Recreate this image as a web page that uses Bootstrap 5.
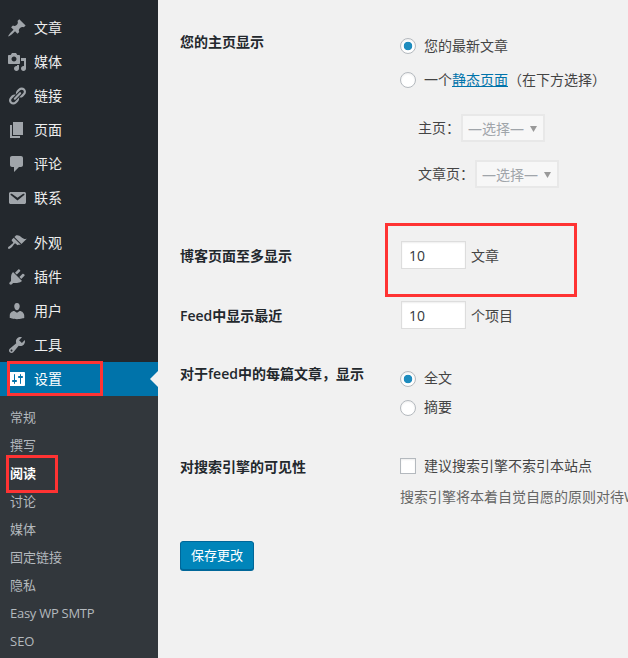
<!DOCTYPE html>
<html lang="zh-CN">
<head>
<meta charset="utf-8">
<title>阅读设置</title>
<link href="https://cdn.jsdelivr.net/npm/bootstrap@5.3.0/dist/css/bootstrap.min.css" rel="stylesheet">
<style>
html,body{height:100%;margin:0;overflow:hidden}
body{background:#f1f1f1;color:#444;font-family:"Open Sans","Noto Sans CJK SC",sans-serif;font-size:14px}
.wp-shell{height:658px;width:628px;overflow:hidden;position:relative}
.wp-side{width:158px;flex:none;background:#23282d;padding-top:11px}
.wp-group+.wp-group{margin-top:11px}
.wp-item{height:34px;padding-left:7px;gap:7px;color:#eee;text-decoration:none;font-size:14px;position:relative}
.wp-item span{padding-bottom:2px}
.wp-item svg{width:20px;height:20px;fill:#a0a5aa;flex:none}
.wp-item.on{background:#0073aa;color:#fff}
.wp-item.on svg{fill:#fff}
.wp-item.on::after{content:"";position:absolute;right:0;top:9px;border:8px solid transparent;border-right-color:#f1f1f1;border-left-width:0}
.wp-sub{background:#32373c;padding-top:7px;height:262px}
.wp-sub a{display:block;height:28px;line-height:28px;padding-left:10px;font-size:13px;color:#b4b9be;text-decoration:none;white-space:nowrap}
.wp-sub a.on{color:#fff;font-weight:700}
.wp-sub a.tight{letter-spacing:-.27px}
.wp-main{flex:1;min-width:0;padding-left:22px;white-space:nowrap}
.lbl{width:220px;flex:none;font-weight:700;line-height:26px;color:#23282d;font-size:14px}
.lbl i{font-style:normal;font-weight:600}
.mid .lbl{width:221px;padding-top:2px}
.r1{margin-top:29px}
.opt{height:34px;gap:8px}
.opt span{padding-bottom:2px}
.opt2{height:29px;gap:8px}
.opt2 span{padding-bottom:2px}
.opt3{height:24px;gap:8px}
.opt3 span{padding-bottom:1px}
.wp-main .form-check-input{width:16px;height:16px;margin:0;flex:none;border:1px solid #b4b9be;background-color:#fff;box-shadow:inset 0 1px 2px rgba(0,0,0,.07)}
.wp-main .form-check-input:checked[type=radio]{background-image:radial-gradient(circle at center,#1e8cbe 0 4px,transparent 4.6px);background-color:#fff;border-color:#b4b9be}
.wp-main .form-check-input[type=checkbox]{border-radius:0}
.wp-main a{color:#0073aa}
.sel-row{height:28px;padding-left:18px;gap:1px}
.sel-row>span{padding-bottom:2px}
.sel-row+.sel-row{margin-top:18px}
.sel-first{margin-top:17px}
.wp-main .form-select{width:84px;height:28px;padding:0 0 0 5px;border:2px solid #e8e8e8;border-radius:0;font-size:14px;color:#a0a5aa;background-color:#f7f7f7;opacity:1;
background-image:url("data:image/svg+xml,%3Csvg xmlns='http://www.w3.org/2000/svg' width='7' height='7'%3E%3Cpath d='M0 1h7L3.5 7z' fill='%23999'/%3E%3C/svg%3E");background-size:7px 7px;background-position:right 6px center;font-family:"Open Sans","Noto Sans CJK SC",sans-serif}
.mid{height:28px}
.wp-main .form-control{width:65px;height:28px;padding:0 0 0 7px;border:1px solid #ddd;border-radius:0;font-size:14px;color:#32373c;background:#fff;box-shadow:inset 0 1px 2px rgba(0,0,0,.07);flex:none}
.wp-main .form-control+span{margin-left:5px}
.m53{margin-top:53px}.m32{margin-top:32px}
.pt3{padding-top:3px}
.desc{color:#666;line-height:24px;margin-top:7px}
.wp-main .btn-save{width:74px;height:29px;padding:0;background:#0085ba;border:1px solid #006799;border-radius:3px;color:#fff;font-size:13px;box-shadow:0 1px 0 #006799;display:block}
.mark-box{position:absolute;border:3px solid #f33;pointer-events:none}
.mb1{left:7px;top:361px;width:96px;height:35px}
.mb2{left:6px;top:455px;width:52px;height:38px}
.mb3{left:385px;top:223px;width:192px;height:74px}
</style>
</head>
<body>
<div class="wp-shell d-flex">
  <nav class="wp-side">
    <div class="wp-group">
      <a class="wp-item d-flex align-items-center" href="#"><svg viewBox="0 0 20 20"><path d="M10.44 3.02l1.82-1.82 6.36 6.35-1.83 1.82c-1.05-.68-2.48-.57-3.41.36l-.75.75c-.92.93-1.04 2.35-.35 3.41l-1.83 1.82-2.41-2.41-2.8 2.79c-.42.42-3.38 2.71-3.8 2.29s1.86-3.39 2.28-3.81l2.79-2.79L4.1 9.36l1.83-1.82c1.05.69 2.48.57 3.4-.36l.75-.75c.93-.92 1.05-2.35.36-3.41z"/></svg><span>文章</span></a>
      <a class="wp-item d-flex align-items-center" href="#"><svg viewBox="0 0 20 20"><path d="M13 11V4c0-.55-.45-1-1-1h-1.67L9 1H5L3.67 3H2c-.55 0-1 .45-1 1v7c0 .55.45 1 1 1h10c.55 0 1-.45 1-1zM7 4.5c1.38 0 2.5 1.12 2.5 2.5S8.38 9.5 7 9.5 4.5 8.38 4.5 7 5.62 4.5 7 4.5zM14 6h5v10.5c0 1.38-1.12 2.5-2.5 2.5S14 17.88 14 16.5s1.12-2.5 2.5-2.5c.17 0 .34.02.5.05V9h-3V6zm-4 8.05V13h2v3.5c0 1.38-1.12 2.5-2.5 2.5S7 17.88 7 16.5 8.12 14 9.5 14c.17 0 .34.02.5.05z"/></svg><span>媒体</span></a>
      <a class="wp-item d-flex align-items-center" href="#"><svg viewBox="0 0 20 20"><path d="M17.74 2.76c1.68 1.69 1.68 4.41 0 6.1l-1.53 1.52c-1.12 1.12-2.7 1.47-4.14 1.09l2.62-2.61.76-.77.76-.76c.84-.84.84-2.2 0-3.04-.84-.85-2.2-.85-3.04 0l-.77.76-3.38 3.38c-.37-1.44-.02-3.02 1.1-4.14l1.52-1.53c1.69-1.68 4.42-1.68 6.1 0zM8.59 13.43l5.34-5.34c.42-.42.42-1.1 0-1.52-.44-.43-1.13-.39-1.53 0l-5.33 5.34c-.42.42-.42 1.1 0 1.52.44.43 1.13.39 1.52 0zm-.76 2.29l4.14-4.15c.38 1.44.03 3.02-1.09 4.14l-1.52 1.53c-1.69 1.68-4.41 1.68-6.1 0-1.68-1.68-1.68-4.42 0-6.1l1.53-1.52c1.12-1.12 2.7-1.47 4.14-1.1l-4.14 4.15c-.85.84-.85 2.2 0 3.05.84.84 2.2.84 3.04 0z"/></svg><span>链接</span></a>
      <a class="wp-item d-flex align-items-center" href="#"><svg viewBox="0 0 20 20"><path d="M6 15V2h10v13H6zm-1 1h8v2H3V5h2v11z"/></svg><span>页面</span></a>
      <a class="wp-item d-flex align-items-center" href="#"><svg viewBox="0 0 20 20"><path d="M5 2h9c1.1 0 2 .9 2 2v7c0 1.1-.9 2-2 2h-2l-5 5v-5H5c-1.1 0-2-.9-2-2V4c0-1.1.9-2 2-2z"/></svg><span>评论</span></a>
      <a class="wp-item d-flex align-items-center" href="#"><svg viewBox="0 0 20 20"><path d="M3.87 4h13.25C18.37 4 19 4.59 19 5.79v8.42c0 1.19-.63 1.79-1.88 1.79H3.87c-1.25 0-1.88-.6-1.88-1.79V5.79c0-1.2.63-1.79 1.88-1.79zm6.62 8.6l6.74-5.53c.24-.2.43-.66.13-1.07-.29-.41-.82-.42-1.17-.17l-5.7 3.86L4.8 5.83c-.35-.25-.88-.24-1.17.17-.3.41-.11.87.13 1.07z"/></svg><span>联系</span></a>
    </div>
    <div class="wp-group">
      <a class="wp-item d-flex align-items-center" href="#"><svg viewBox="0 0 20 20"><path d="M14.48 11.06L7.41 3.99l1.5-1.5c.5-.56 2.3-.47 3.51.32 1.21.8 1.43 1.28 2.91 2.1 1.18.64 2.45 1.26 4.45.85zm-.71.71L6.7 4.7 4.93 6.47c-.39.39-.39 1.02 0 1.41l1.06 1.06c.39.39.39 1.03 0 1.42-.6.6-1.43 1.11-2.21 1.69-.35.26-.7.53-1.01.84C1.43 13.23.4 14.8 1.2 15.6c.8.79 2.37-.23 3.71-1.57.31-.31.58-.66.85-1.02.57-.78 1.08-1.61 1.69-2.21.39-.39 1.02-.39 1.41 0l1.06 1.06c.39.39 1.02.39 1.41 0z"/></svg><span>外观</span></a>
      <a class="wp-item d-flex align-items-center" href="#"><svg viewBox="0 0 20 20"><path d="M13.11 4.36L9.87 7.6 8 5.73l3.24-3.24c.35-.34 1.05-.2 1.56.32.52.51.66 1.21.31 1.55zm-8 1.77l.91-1.12 9.01 9.01-1.19.84c-.71.71-2.63 1.16-3.82 1.16H6.14L4.9 17.26c-.59.59-1.54.59-2.12 0-.59-.58-.59-1.53 0-2.12l1.24-1.24v-3.88c0-1.13.4-3.19 1.09-3.89zm7.26 3.97l3.24-3.24c.34-.35 1.04-.21 1.55.31.52.51.66 1.21.31 1.55l-3.24 3.25z"/></svg><span>插件</span></a>
      <a class="wp-item d-flex align-items-center" href="#"><svg viewBox="0 0 20 20"><path d="M10 9.25c-2.27 0-2.73-3.44-2.73-3.44C7 4.02 7.82 2 9.97 2c2.16 0 2.98 2.02 2.71 3.81 0 0-.41 3.44-2.68 3.44zm0 2.57L12.72 10c2.39 0 4.52 2.33 4.52 4.53v2.49s-3.65 1.13-7.24 1.13c-3.65 0-7.24-1.13-7.24-1.13v-2.49c0-2.25 1.94-4.48 4.47-4.48z"/></svg><span>用户</span></a>
      <a class="wp-item d-flex align-items-center" href="#"><svg viewBox="0 0 20 20"><path d="M16.68 9.77c-1.34 1.34-3.3 1.67-4.95.99l-5.41 6.52c-.99.99-2.59.99-3.58 0s-.99-2.59 0-3.57l6.52-5.42c-.68-1.65-.35-3.61.99-4.95 1.28-1.28 3.12-1.62 4.72-1.06l-2.89 2.89 2.82 2.82 2.86-2.87c.53 1.58.18 3.39-1.08 4.65zM3.81 16.21c.4.39 1.04.39 1.43 0 .4-.4.4-1.04 0-1.43-.39-.4-1.03-.4-1.43 0-.39.39-.39 1.03 0 1.43z"/></svg><span>工具</span></a>
      <a class="wp-item on d-flex align-items-center" href="#"><svg viewBox="0 0 20 20"><path d="M18 16V4c0-.55-.45-1-1-1H3c-.55 0-1 .45-1 1v12c0 .55.45 1 1 1h14c.55 0 1-.45 1-1zM8 11h1c.55 0 1 .45 1 1s-.45 1-1 1H8v1.5c0 .28-.22.5-.5.5s-.5-.22-.5-.5V13H6c-.55 0-1-.45-1-1s.45-1 1-1h1V5.5c0-.28.22-.5.5-.5s.5.22.5.5V11zm5-2h-1c-.55 0-1-.45-1-1s.45-1 1-1h1V5.5c0-.28.22-.5.5-.5s.5.22.5.5V7h1c.55 0 1 .45 1 1s-.45 1-1 1h-1v5.5c0 .28-.22.5-.5.5s-.5-.22-.5-.5V9z"/></svg><span>设置</span></a>
      <div class="wp-sub">
        <a href="#">常规</a>
        <a href="#">撰写</a>
        <a class="on" href="#">阅读</a>
        <a href="#">讨论</a>
        <a href="#">媒体</a>
        <a href="#">固定链接</a>
        <a href="#">隐私</a>
        <a class="tight" href="#">Easy WP SMTP</a>
        <a href="#">SEO</a>
      </div>
    </div>
  </nav>
  <main class="wp-main">
    <div class="d-flex r1">
      <div class="lbl">您的主页显示</div>
      <div>
        <label class="opt d-flex align-items-center"><input class="form-check-input" type="radio" name="front" checked><span>您的最新文章</span></label>
        <label class="opt d-flex align-items-center"><input class="form-check-input" type="radio" name="front"><span>一个<a href="#">静态页面</a>（在下方选择）</span></label>
        <div class="sel-row sel-first d-flex align-items-center"><span>主页：</span><select class="form-select" disabled><option>—选择—</option></select></div>
        <div class="sel-row d-flex align-items-center"><span>文章页：</span><select class="form-select" disabled><option>—选择—</option></select></div>
      </div>
    </div>
    <div class="d-flex align-items-center mid m53">
      <div class="lbl">博客页面至多显示</div>
      <input class="form-control" type="text" value="10"><span>文章</span>
    </div>
    <div class="d-flex align-items-center mid m32">
      <div class="lbl"><i>Feed</i>中显示最近</div>
      <input class="form-control" type="text" value="10"><span>个项目</span>
    </div>
    <div class="d-flex m32">
      <div class="lbl">对于<i>feed</i>中的每篇文章，显示</div>
      <div class="pt3">
        <label class="opt2 d-flex align-items-center"><input class="form-check-input" type="radio" name="feed" checked><span>全文</span></label>
        <label class="opt2 d-flex align-items-center"><input class="form-check-input" type="radio" name="feed"><span>摘要</span></label>
      </div>
    </div>
    <div class="d-flex m32">
      <div class="lbl">对搜索引擎的可见性</div>
      <div>
        <label class="opt3 d-flex align-items-center"><input class="form-check-input" type="checkbox"><span>建议搜索引擎不索引本站点</span></label>
        <div class="desc">搜索引擎将本着自觉自愿的原则对待WordPress站点的这一请求。</div>
      </div>
    </div>
    <button class="btn btn-save m32" type="button">保存更改</button>
  </main>
  <div class="mark-box mb1"></div>
  <div class="mark-box mb2"></div>
  <div class="mark-box mb3"></div>
</div>
<script src="https://cdn.jsdelivr.net/npm/bootstrap@5.3.0/dist/js/bootstrap.bundle.min.js"></script>
</body>
</html>
